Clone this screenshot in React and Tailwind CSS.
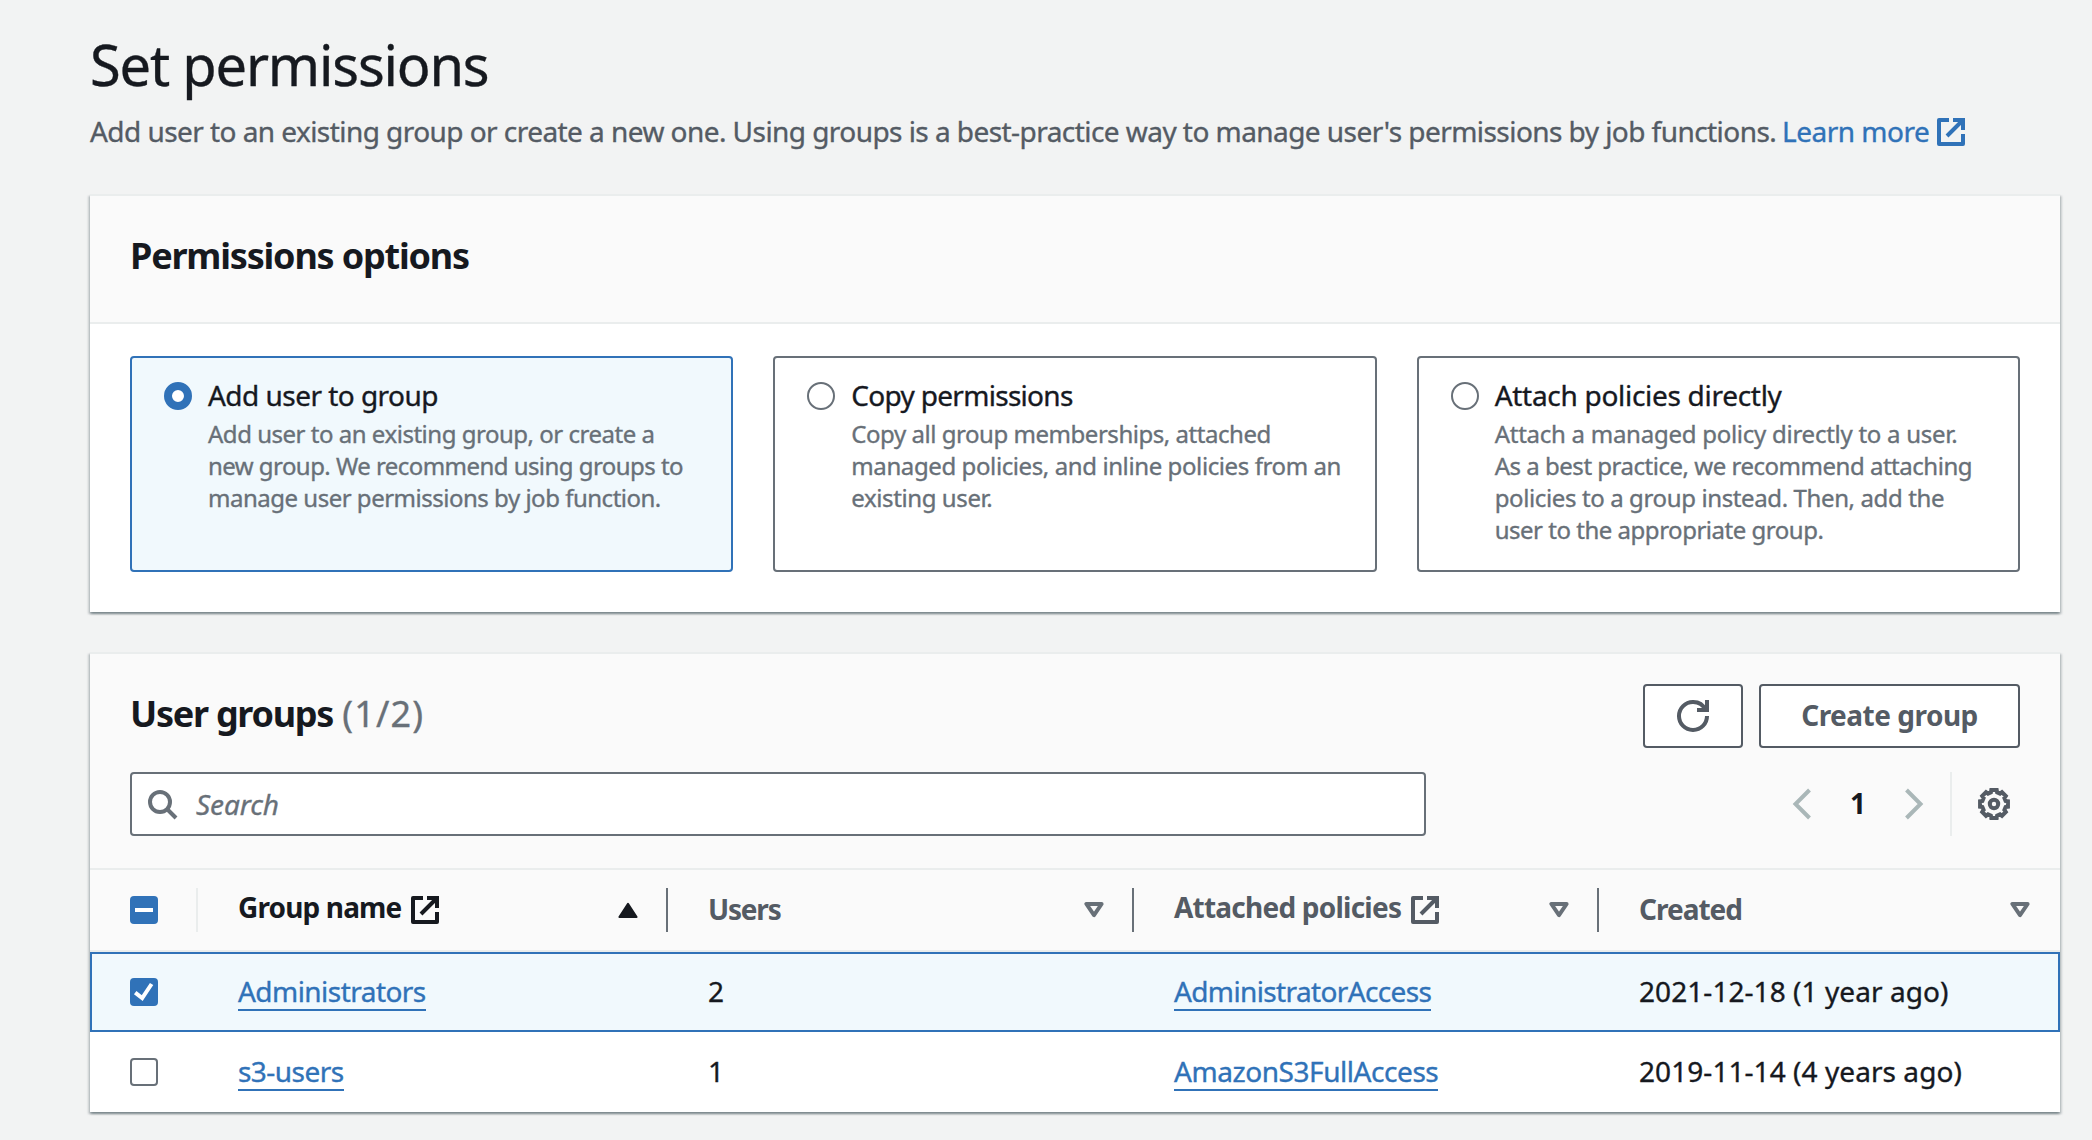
import clsx from "clsx";

function ExternalIcon({ className }) {
  return (
    <svg className={clsx("size-8 shrink-0", className)} viewBox="0 0 16 16" fill="none" stroke="currentColor" strokeWidth="2" strokeLinejoin="round">
      <path d="M7 2H2v12h12V9" />
      <path d="M9 2h5v5M14 2l-8 8" strokeLinejoin="miter" />
    </svg>
  );
}

function SearchIcon() {
  return (
    <svg className="size-8 shrink-0 text-[#687078]" viewBox="0 0 32 32" fill="none" stroke="currentColor" strokeWidth="4">
      <circle cx="14" cy="14" r="10" />
      <path d="m21 21 9 9" />
    </svg>
  );
}

function RefreshIcon() {
  return (
    <svg className="size-8" viewBox="0 0 16 16" fill="none" stroke="currentColor" strokeWidth="2">
      <path d="M10 5h5V0" />
      <path d="M15 8a6.957 6.957 0 0 1-7 7 6.957 6.957 0 0 1-7-7 6.957 6.957 0 0 1 7-7 6.87 6.87 0 0 1 6.3 4" />
    </svg>
  );
}

function Chevron({ d }) {
  return (
    <svg className="size-8 text-[#aab7b8]" viewBox="0 0 32 32" fill="none" stroke="currentColor" strokeWidth="4">
      <path d={d} />
    </svg>
  );
}

// Outline of an eight-toothed gear, as [angle, radius] corners repeated every 45 degrees.
const gearPoints = Array.from({ length: 8 }, (_, i) =>
  [
    [-11, 14.2],
    [11, 14.2],
    [15, 12],
    [30, 12],
  ].map(([deg, r]) => {
    const a = ((i * 45 + deg - 90) * Math.PI) / 180;
    return `${(16 + r * Math.cos(a)).toFixed(2)},${(16 + r * Math.sin(a)).toFixed(2)}`;
  })
)
  .flat()
  .join(" ");

function GearIcon() {
  return (
    <svg className="size-8 text-[#545b64]" viewBox="0 0 32 32" fill="none" stroke="currentColor">
      <polygon points={gearPoints} strokeWidth="4" />
      <circle cx="16" cy="16" r="4.2" strokeWidth="4" />
    </svg>
  );
}

function SortIcon({ active }) {
  return active ? (
    <svg className="h-4 w-5 text-[#16191f]" viewBox="0 0 20 16" fill="currentColor" stroke="currentColor" strokeWidth="2" strokeLinejoin="round">
      <path d="M10 1.8 18.6 15H1.4z" />
    </svg>
  ) : (
    <svg className="h-4 w-5 text-[#687078]" viewBox="0 0 20 16" fill="none" stroke="currentColor" strokeWidth="4" strokeLinejoin="round">
      <path d="M2.4 2h15.2L10 13.2z" />
    </svg>
  );
}

function Radio({ checked }) {
  return (
    <span
      className={clsx(
        "mt-2 size-7 shrink-0 rounded-full bg-white",
        checked ? "border-8 border-[#3072b8]" : "border-2 border-[#687078]"
      )}
    />
  );
}

function Checkbox({ state }) {
  if (state === "off") {
    return <span className="block size-7 rounded border-2 border-[#687078] bg-white" />;
  }
  return (
    <span className="block size-7 rounded bg-[#3072b8]">
      <svg className="size-7" viewBox="0 0 28 28" fill="none" stroke="white" strokeWidth="4">
        <path d={state === "on" ? "M5.2 14.6 12.2 20 21.6 6" : "M5 14h18"} />
      </svg>
    </span>
  );
}

const panel =
  "border-t-2 border-[#eaeded] bg-white shadow-[0_2px_2px_0_rgba(0,28,36,0.3),2px_2px_2px_0_rgba(0,28,36,0.15),-2px_2px_2px_0_rgba(0,28,36,0.15)]";

const options = [
  {
    title: "Add user to group",
    tracking: "tracking-[-0.53px]",
    checked: true,
    lines: [
      { text: "Add user to an existing group, or create a", tracking: "tracking-[-0.48px]" },
      { text: "new group. We recommend using groups to", tracking: "tracking-[-0.55px]" },
      { text: "manage user permissions by job function.", tracking: "tracking-[-0.49px]" },
    ],
  },
  {
    title: "Copy permissions",
    tracking: "tracking-[-0.7px]",
    lines: [
      { text: "Copy all group memberships, attached", tracking: "tracking-[-0.46px]" },
      { text: "managed policies, and inline policies from an", tracking: "tracking-[-0.4px]" },
      { text: "existing user.", tracking: "tracking-[-0.4px]" },
    ],
  },
  {
    title: "Attach policies directly",
    tracking: "tracking-[-0.29px]",
    lines: [
      { text: "Attach a managed policy directly to a user.", tracking: "tracking-[-0.26px]" },
      { text: "As a best practice, we recommend attaching", tracking: "tracking-[-0.48px]" },
      { text: "policies to a group instead. Then, add the", tracking: "tracking-[-0.38px]" },
      { text: "user to the appropriate group.", tracking: "tracking-[-0.48px]" },
    ],
  },
];

const columns = [
  { label: "Group name", tracking: "tracking-[-0.85px]", external: true, active: true },
  { label: "Users", tracking: "tracking-[-1.2px]" },
  { label: "Attached policies", tracking: "tracking-[-0.77px]", external: true },
  { label: "Created", tracking: "tracking-[-1px]" },
];

const rows = [
  {
    name: "Administrators",
    nameTracking: "tracking-[-0.54px]",
    users: "2",
    policy: "AdministratorAccess",
    policyTracking: "tracking-[-0.63px]",
    created: "2021-12-18 (1 year ago)",
    selected: true,
  },
  {
    name: "s3-users",
    nameTracking: "tracking-[-0.55px]",
    users: "1",
    policy: "AmazonS3FullAccess",
    policyTracking: "tracking-[-0.44px]",
    created: "2019-11-14 (4 years ago)",
  },
];

const grid = "grid grid-cols-[108px_470px_466px_465px_461px]";
const bold = "font-bold [-webkit-text-stroke:0]";

function TextLink({ children, className }) {
  return (
    <a href="#" className={clsx("h-[38px] border-b-2 border-[#3072b8] leading-9 text-[#3072b8]", className)}>
      {children}
    </a>
  );
}

export default function App() {
  return (
    <main className="h-[1140px] overflow-hidden bg-[#f2f3f3] pl-[90px] pr-8 pt-7 font-['Noto_Sans',sans-serif] text-[28px] leading-[44px] text-[#16191f] [-webkit-text-stroke:0.35px]">
      <h1 className="text-[56px] leading-[72px] tracking-[-1.2px]">Set permissions</h1>
      <p className="mt-[9px] flex h-11 items-center whitespace-nowrap text-[#545b64]">
        <span className="w-[1692px] tracking-[-0.555px]">
          Add user to an existing group or create a new one. Using groups is a best-practice way to manage user's permissions by job functions.
        </span>
        <a href="#" className="flex items-center text-[#3072b8]">
          <span className="w-[153px] tracking-[-0.5px]">Learn more</span>
          <ExternalIcon className="mt-0.5" />
        </a>
      </p>

      <section className={clsx("mt-[41px]", panel)}>
        <header className="flex h-32 items-center border-b-2 border-[#eaeded] bg-[#fafafa] px-10 pb-1.5">
          <h2 className={clsx("text-4xl leading-[44px] tracking-[-1.2px]", bold)}>Permissions options</h2>
        </header>
        <div className="grid grid-cols-3 gap-10 px-10 pb-10 pt-8">
          {options.map((o) => (
            <label
              key={o.title}
              className={clsx(
                "flex h-[216px] gap-4 rounded border-2 pl-8 pt-4",
                o.checked ? "border-[#3072b8] bg-[#f1f9fd]" : "border-[#687078] bg-white"
              )}
            >
              <Radio checked={o.checked} />
              <span className="whitespace-nowrap">
                <span className={clsx("block leading-[42px]", o.tracking)}>{o.title}</span>
                <span className="block pt-0.5 text-2xl leading-8 text-[#687078]">
                  {o.lines.map((line) => (
                    <span key={line.text} className={clsx("block", line.tracking)}>
                      {line.text}
                    </span>
                  ))}
                </span>
              </span>
            </label>
          ))}
        </div>
      </section>

      <section className={clsx("mt-10", panel)}>
        <header className="border-b-2 border-[#eaeded] bg-[#fafafa] px-10 pb-8 pt-[30px]">
          <div className="flex h-16 items-center justify-between">
            <h2 className="flex gap-[9px] pb-1 text-4xl leading-[44px]">
              <span className={clsx("tracking-[-1.27px]", bold)}>User groups</span>
              <span className="tracking-[1.2px] text-[#687078]">(1/2)</span>
            </h2>
            <div className={clsx("flex gap-4 text-[#545b64]", bold)}>
              <button className="grid h-16 w-[100px] place-items-center rounded border-2 border-[#545b64] bg-white">
                <RefreshIcon />
              </button>
              <button className="h-16 w-[261px] rounded border-2 border-[#545b64] bg-white pb-0.5 tracking-[-0.5px]">Create group</button>
            </div>
          </div>
          <div className="mt-6 flex justify-between">
            <div className="flex h-16 w-[1296px] items-center gap-[18px] rounded border-2 border-[#687078] bg-white pl-3.5">
              <SearchIcon />
              <span className="italic tracking-[-0.1px] text-[#687078]">Search</span>
            </div>
            <div className="flex h-16 items-center pr-2.5">
              <Chevron d="M23.5 2 9.5 16l14 14" />
              <span className={clsx("w-20 pb-0.5 text-center", bold)}>1</span>
              <Chevron d="m8.5 2 14 14-14 14" />
              <span className="ml-5 mr-[26px] h-16 w-0.5 bg-[#eaeded]" />
              <GearIcon />
            </div>
          </div>
        </header>

        <div className={clsx(grid, bold, "h-[82px] items-center border-b-2 border-[#eaeded] bg-[#fafafa]")}>
          <div className="flex h-11 items-center border-r-2 border-[#eaeded] pl-10">
            <Checkbox state="mixed" />
          </div>
          {columns.map((c, i) => (
            <div
              key={c.label}
              className={clsx(
                "flex h-11 items-center justify-between pl-10",
                i < 3 ? "border-r-2 border-[#687078] pr-7" : "pr-[30px]",
                !c.active && "text-[#545b64]"
              )}
            >
              <span className="flex items-center gap-2">
                <span className={clsx(c.tracking, c.external ? "pb-1.5" : "pb-0.5")}>{c.label}</span>
                {c.external && <ExternalIcon />}
              </span>
              <SortIcon active={c.active} />
            </div>
          ))}
        </div>

        {rows.map((r) => (
          <div
            key={r.name}
            className={clsx(
              grid,
              "h-20 items-center",
              r.selected && "bg-[#f1f9fd] outline-2 -outline-offset-2 outline-[#3072b8]"
            )}
          >
            <div className="pl-10">
              <Checkbox state={r.selected ? "on" : "off"} />
            </div>
            <div className="flex pl-10">
              <TextLink className={r.nameTracking}>{r.name}</TextLink>
            </div>
            <div className="pb-0.5 pl-10">{r.users}</div>
            <div className="flex pl-10">
              <TextLink className={r.policyTracking}>{r.policy}</TextLink>
            </div>
            <div className="pb-0.5 pl-10 tracking-[0.06px]">{r.created}</div>
          </div>
        ))}
      </section>
    </main>
  );
}
